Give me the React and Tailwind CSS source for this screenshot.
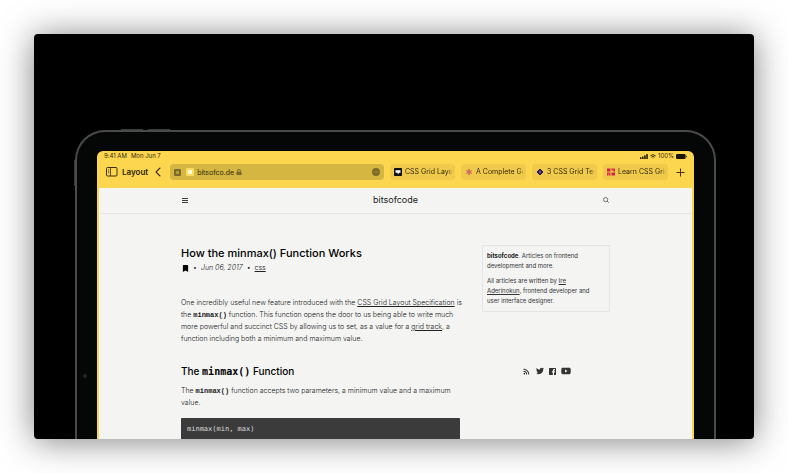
import { FaBookmark, FaTwitter, FaYoutube, FaLock } from "react-icons/fa";
import { MdRssFeed } from "react-icons/md";

function SidebarIcon() {
  return (
    <svg viewBox="0 0 12 10" className="h-[10px] w-3" fill="none" stroke="#3d3110" strokeWidth="1">
      <rect x="0.5" y="0.5" width="10.5" height="8.5" rx="1" />
      <path d="M4.5 1v8M2 2.8h1.2M2 4.3h1.2M2 5.8h1.2" strokeWidth="0.8" />
    </svg>
  );
}

function ChevronIcon() {
  return (
    <svg viewBox="0 0 6 10" className="h-[10px] w-[6px]" fill="none" stroke="#3d3110" strokeWidth="1.1" strokeLinecap="round" strokeLinejoin="round">
      <path d="M5 1 1 5l4 4" />
    </svg>
  );
}

function PlusIcon() {
  return (
    <svg viewBox="0 0 9 9" className="size-[9px]" fill="none" stroke="#4a3010" strokeWidth="1">
      <path d="M4.5 .5v8M.5 4.5h8" />
    </svg>
  );
}

function FacebookIcon() {
  return (
    <svg viewBox="0 0 14 14" className="size-[7px]" fill="currentColor">
      <path d="M1 0h12a1 1 0 0 1 1 1v12a1 1 0 0 1-1 1H10V8.800h1.800l.3-2.200H10V5.400c0-.7.3-1 1.100-1h1V2.400c-.3-.1-.9-.2-1.600-.2-1.700 0-2.800 1-2.800 2.900v1.500H5.900v2.200h1.800V14H1a1 1 0 0 1-1-1V1a1 1 0 0 1 1-1z" />
    </svg>
  );
}

function TabFavicon({ kind }) {
  if (kind === "badge") {
    return (
      <svg viewBox="0 0 8 8" className="size-2 shrink-0">
        <rect width="8" height="8" rx="0.8" fill="#111" />
        <path d="M1.5 2.2h5v2.6H5.2L4 6.4 3.6 4.8H1.5z" fill="#fff" />
      </svg>
    );
  }
  if (kind === "asterisk") {
    return (
      <svg viewBox="0 0 8 8" className="size-2 shrink-0" fill="none" strokeWidth="1.1" strokeLinecap="round">
        <path d="M4 1.2v5.6" stroke="#b0603e" />
        <path d="M1.7 2.7l4.6 2.6" stroke="#e5533d" />
        <path d="M1.7 5.3l4.6-2.6" stroke="#c9608a" />
      </svg>
    );
  }
  if (kind === "diamond") {
    return (
      <svg viewBox="0 0 8 8" className="size-2 shrink-0">
        <path d="M4 1 7 4 4 7 1 4z" fill="#2b1b4d" stroke="#2b1b4d" strokeLinejoin="round" />
        <circle cx="4" cy="4" r="1.2" fill="#6d55b5" />
      </svg>
    );
  }
  return (
    <svg viewBox="0 0 8 8" className="size-2 shrink-0" fill="#d81e4a">
      <path d="M0 .5h3.5v3H0zM4.5 .5H6v2H4.5zM6.3 .5H8v3H6.3zM0 4.5h3.5v1.2H0zM4.5 4.5H8v3H4.5zM0 6h1.5v1.5H0zM2 6h1.5v1.5H2z" />
    </svg>
  );
}

const tabs = [
  { kind: "badge", title: "CSS Grid Layout" },
  { kind: "asterisk", title: "A Complete Guide" },
  { kind: "diamond", title: "3 CSS Grid Techniques" },
  { kind: "grid", title: "Learn CSS Grid" },
];

function StatusBar() {
  return (
    <div className="flex h-[10px] items-center justify-between px-[7px] text-[6px] leading-none text-[#33290f]">
      <div className="flex gap-1">
        <span>9:41 AM</span>
        <span>Mon Jun 7</span>
      </div>
      <div className="flex items-center gap-[2px]">
        <svg viewBox="0 0 8 5" className="h-[5px] w-2" fill="#1c1705">
          <rect x="0" y="3.3" width="1.5" height="1.7" rx=".3" />
          <rect x="2.1" y="2.4" width="1.5" height="2.6" rx=".3" />
          <rect x="4.2" y="1.2" width="1.5" height="3.8" rx=".3" />
          <rect x="6.3" y="0" width="1.5" height="5" rx=".3" />
        </svg>
        <svg viewBox="0 0 8 6" className="h-[5px] w-[6px]" fill="none" stroke="#33290f" strokeWidth="1.3">
          <path d="M.5 2.2a5 5 0 0 1 7 0M2 3.8a3 3 0 0 1 4 0" />
          <circle cx="4" cy="5" r=".6" fill="#33290f" stroke="none" />
        </svg>
        <span>100%</span>
        <svg viewBox="0 0 11 5" className="h-[5px] w-[11px]" fill="#1c1705">
          <rect width="9.6" height="5" rx="1.2" />
          <rect x="10" y="1.6" width=".8" height="1.8" rx=".4" />
        </svg>
      </div>
    </div>
  );
}

function Toolbar() {
  return (
    <div className="flex h-[27px] items-center px-[9px] pb-[5px] text-[7px] leading-none text-[#33290f]">
      <button aria-label="Show sidebar">
        <SidebarIcon />
      </button>
      <button className="ml-1 text-[8px] font-semibold text-[#2a2208]">Layout</button>
      <button aria-label="Back" className="ml-[7px]">
        <ChevronIcon />
      </button>
      <div className="ml-[9px] flex h-4 min-w-0 flex-1 items-center rounded-[4px] bg-[#d5b640] px-1">
        <svg viewBox="0 0 7 7" className="mr-[5px] size-[7px] shrink-0" fill="#7b6a2c">
          <rect width="7" height="7" rx="1.2" />
          <path d="M2 2h3v3H2z" fill="#b39a3a" />
        </svg>
        <svg viewBox="0 0 8 8" className="size-2 shrink-0">
          <rect width="8" height="8" rx="1" fill="#f9dd62" />
          <rect x="2" y="2" width="4" height="4" rx="1" fill="#fffbe0" />
        </svg>
        <input
          aria-label="Address"
          defaultValue="bitsofco.de"
          className="ml-[3px] field-sizing-content bg-transparent p-0 outline-none"
        />
        <FaLock className="ml-[2px] size-[6px] text-[#7b6a2c]" />
        <button aria-label="Page menu" className="ml-auto">
          <svg viewBox="0 0 8 8" className="size-2">
            <circle cx="4" cy="4" r="4" fill="#7d6a26" />
            <path d="M1.8 4h.9M3.6 4h.9M5.3 4h.9" stroke="#c9ad3f" strokeWidth=".9" />
          </svg>
        </button>
      </div>
      <div role="tablist" className="ml-[6px] flex gap-[6px]">
        {tabs.map((tab) => (
          <button
            key={tab.title}
            role="tab"
            className="flex h-4 w-[65px] items-center gap-[3px] rounded-[4px] bg-[#f0ca4b] pr-[2px] pl-1"
          >
            <TabFavicon kind={tab.kind} />
            <span className="min-w-0 flex-1 overflow-hidden text-left leading-4 whitespace-nowrap [mask-image:linear-gradient(to_right,#000_90%,transparent)]">
              {tab.title}
            </span>
          </button>
        ))}
      </div>
      <button aria-label="New tab" className="ml-[8px]">
        <PlusIcon />
      </button>
    </div>
  );
}

function SiteHeader() {
  return (
    <header className="border-b border-[#e6e6e6]">
      <div className="mx-auto flex h-[25px] w-[429px] max-w-full items-center justify-between pb-[1px]">
        <button aria-label="Menu" className="flex w-2 justify-center">
          <svg viewBox="0 0 6 5" className="h-[5px] w-[6px]" stroke="#3c3c3c" strokeWidth="1">
            <path d="M0 .5h6M0 2.5h6M0 4.5h6" />
          </svg>
        </button>
        <a href="#home" className="text-[9px] leading-3 text-[#222]">
          bitsofcode
        </a>
        <button aria-label="Search" className="flex w-2 justify-center">
          <svg viewBox="0 0 6 6" className="size-[6px]" fill="none" stroke="#555" strokeWidth=".8">
            <circle cx="2.6" cy="2.6" r="2.1" />
            <path d="M4.1 4.1 5.8 5.8" />
          </svg>
        </button>
      </div>
    </header>
  );
}

function Code({ children }) {
  return <code className="font-['Liberation_Mono',monospace] text-[7px] font-bold text-[#1a1a1a]">{children}</code>;
}

function Article() {
  return (
    <article className="w-[283px] text-[7px] leading-3 font-light text-[#222]">
      <h1 className="text-[11px] leading-[17px] font-medium text-black">How the minmax() Function Works</h1>
      <p className="flex h-3 items-center gap-1 pl-[1px]">
        <FaBookmark className="size-[7px] text-black" />
        <span>•</span>
        <time dateTime="2017-06-06" className="italic">Jun 06, 2017</time>
        <span>•</span>
        <a href="#css" className="underline">css</a>
      </p>
      <p className="mt-[23px]">
        One incredibly useful new feature introduced with the{" "}
        <a href="#spec" className="underline">CSS Grid Layout Specification</a> is the <Code>minmax()</Code> function.
        This function opens the door to us being able to write much more powerful and succinct CSS by allowing us to
        set, as a value for a <a href="#track" className="underline">grid track</a>, a function including both a
        minimum and maximum value.
      </p>
      <h2 className="mt-[18px] text-[10px] leading-4 font-medium text-black">
        The <code className="font-['DejaVu_Sans_Mono',monospace] font-bold">minmax()</code> Function
      </h2>
      <p className="mt-[5px]">
        The <Code>minmax()</Code> function accepts two parameters, a minimum value and a maximum value.
      </p>
      <pre className="mt-[9px] mr-1 overflow-hidden rounded-t-[1px] bg-[#3b3b3b] px-[6px] pt-[5px] pb-[4px] font-['DejaVu_Sans_Mono',monospace] text-[7px] leading-3 text-[#dcdcdc]">
        minmax(min, max)
      </pre>
    </article>
  );
}

function Aside() {
  return (
    <aside className="w-32 text-[6px] text-[#333]">
      <div className="border border-[#e4e4e4] py-[5px] pr-2 pl-1 leading-[10px]">
        <p>
          <strong className="font-bold text-[#222]">bitsofcode</strong>. Articles on frontend development and more.
        </p>
        <p className="mt-[5px]">
          All articles are written by <a href="#author" className="underline">Ire Aderinokun</a>, frontend developer and
          user interface designer.
        </p>
      </div>
      <nav aria-label="Social" className="mt-[54px] flex items-center justify-center gap-[5px] text-[#333]">
        <a href="#rss" aria-label="RSS"><MdRssFeed className="size-[9px]" /></a>
        <a href="#twitter" aria-label="Twitter"><FaTwitter className="size-2" /></a>
        <a href="#facebook" aria-label="Facebook"><FacebookIcon /></a>
        <a href="#youtube" aria-label="YouTube"><FaYoutube className="size-[10px]" /></a>
      </nav>
    </aside>
  );
}

export default function App() {
  return (
    <div className="bg-white p-[34px] font-['Inter',sans-serif]">
      <div className="overflow-hidden rounded-[4px] bg-black pt-[96px] pr-[38px] pl-[41px] shadow-[0_2px_34px_rgba(0,0,0,0.5)]">
        <div className="relative rounded-t-[30px] border-2 border-b-0 border-[#4a4a4a] bg-[#050606] px-5 pt-[19px]">
          <span className="absolute -top-[3px] left-[44px] h-[1px] w-[22px] bg-[#3a3a3a]" />
          <span className="absolute -top-[3px] left-[71px] h-[1px] w-[22px] bg-[#3a3a3a]" />
          <span className="absolute top-[28px] -left-[3px] h-[26px] w-[1px] bg-[#3a3a3a]" />
          <span className="absolute top-[242px] left-[6px] size-[4px] rounded-full bg-[#22242c]" />
          <div className="overflow-hidden rounded-t-[6px] bg-[#fcd64f]">
            <StatusBar />
            <Toolbar />
            <div className="mx-[2px] bg-[#f4f4f3]">
              <SiteHeader />
              <div className="mx-auto flex w-[429px] max-w-full items-start justify-between pt-[31px]">
                <Article />
                <Aside />
              </div>
            </div>
          </div>
        </div>
      </div>
    </div>
  );
}
